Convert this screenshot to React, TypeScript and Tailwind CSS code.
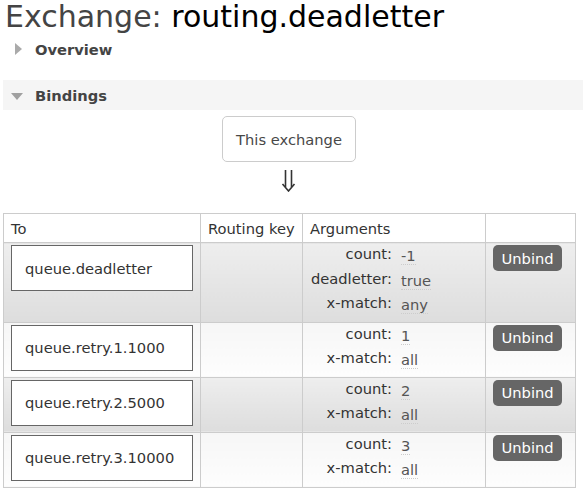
import React from 'react'

type Binding = {
  queue: string
  args: [string, string][]
}

const bindings: Binding[] = [
  {
    queue: 'queue.deadletter',
    args: [
      ['count', '-1'],
      ['deadletter', 'true'],
      ['x-match', 'any'],
    ],
  },
  {
    queue: 'queue.retry.1.1000',
    args: [
      ['count', '1'],
      ['x-match', 'all'],
    ],
  },
  {
    queue: 'queue.retry.2.5000',
    args: [
      ['count', '2'],
      ['x-match', 'all'],
    ],
  },
  {
    queue: 'queue.retry.3.10000',
    args: [
      ['count', '3'],
      ['x-match', 'all'],
    ],
  },
]

const DownArrow = () => (
  <svg width="16" height="24" viewBox="0 0 16 24" fill="none" stroke="#333" strokeWidth="1.6">
    <path d="M4.5 2 V19" />
    <path d="M10.5 2 V19" />
    <path d="M1.5 16 L7.5 23 L13.5 16" strokeLinejoin="miter" />
  </svg>
)

const BindingRow = ({ binding, index }: { binding: Binding; index: number }) => {
  // alternating row shading, like the management UI
  const bg =
    index % 2 === 0
      ? 'bg-linear-to-b from-[#eeeeee] to-[#dddddd]'
      : 'bg-linear-to-b from-[#f6f6f6] to-[#fdfdfd]'

  return (
    <tr>
      <td className={`border border-[#cccccc] px-[7px] pt-[2px] align-top ${bg}`}>
        <div className="flex h-[46px] w-full items-center border border-[#666666] bg-white pl-[13px] text-[#333]">
          {binding.queue}
        </div>
      </td>
      <td className={`border border-[#cccccc] align-top ${bg}`}></td>
      <td className={`border border-[#cccccc] px-[7px] pt-[2px] pb-[7.5px] align-top ${bg}`}>
        <div className="grid grid-cols-[82px_auto] gap-x-[9px] gap-y-[4.5px]">
          {binding.args.map(([key, value]) => (
            <React.Fragment key={key}>
              <div className="text-right leading-[17px] text-[#333]">{key}:</div>
              <div className="pt-[2px]">
                <span className="inline-block border-b border-dotted border-[#cccccc] leading-[17px] text-[#555]">
                  {value}
                </span>
              </div>
            </React.Fragment>
          ))}
        </div>
      </td>
      <td className={`border border-[#cccccc] px-[7px] pt-[2px] align-top ${bg}`}>
        <button className="flex h-[26px] items-center rounded-[5px] bg-[#666666] px-[8.5px] leading-[17px] text-white">
          Unbind
        </button>
      </td>
    </tr>
  )
}

export default function App() {
  return (
    <div className="h-[496px] w-[583px] overflow-hidden bg-white font-['DejaVu_Sans',sans-serif] text-[14.7px] leading-[17px] text-[#484848]">
      <h1 className="pl-[5px] text-[30px] leading-[34px] font-normal">
        <span className="text-[#444]">Exchange: </span>
        <span className="text-black">routing.deadletter</span>
      </h1>

      <div className="ml-[3px] flex h-[30px] items-center">
        <span className="ml-[12px] h-0 w-0 border-y-[6px] border-l-[7px] border-y-transparent border-l-[#aaaaaa]"></span>
        <span className="ml-[13px] font-bold text-[#444]">Overview</span>
      </div>

      <div className="mt-[16px] ml-[3px] flex h-[30px] items-center bg-[#f5f5f5]">
        <span className="mt-[3px] ml-[8px] h-0 w-0 border-x-[6px] border-t-[7px] border-x-transparent border-t-[#a0a0a0]"></span>
        <span className="ml-[12px] font-bold text-[#444]">Bindings</span>
      </div>

      <div className="ml-[3px] w-[572px]">
        <div className="flex flex-col items-center pt-[6px]">
          <div className="flex h-[46px] items-center rounded-[5px] border border-[#cccccc] px-[13.5px] text-[#484848]">
            This exchange
          </div>
          <div className="mt-[6px]">
            <DownArrow />
          </div>
        </div>

        <table className="mt-[21px] w-[572px] table-fixed border-collapse">
          <colgroup>
            <col className="w-[197px]" />
            <col className="w-[102px]" />
            <col className="w-[183px]" />
            <col className="w-[90px]" />
          </colgroup>
          <thead>
            <tr className="bg-white">
              <th className="border border-[#cccccc] px-[7px] pt-[6px] pb-[5px] text-left font-normal text-[#333]">To</th>
              <th className="border border-[#cccccc] px-[7px] pt-[6px] pb-[5px] text-left font-normal text-[#333]">
                Routing key
              </th>
              <th className="border border-[#cccccc] px-[7px] pt-[6px] pb-[5px] text-left font-normal text-[#333]">
                Arguments
              </th>
              <th className="border border-[#cccccc] px-[7px] pt-[6px] pb-[5px]"></th>
            </tr>
          </thead>
          <tbody>
            {bindings.map((b, i) => (
              <BindingRow key={b.queue} binding={b} index={i} />
            ))}
          </tbody>
        </table>
      </div>
    </div>
  )
}
